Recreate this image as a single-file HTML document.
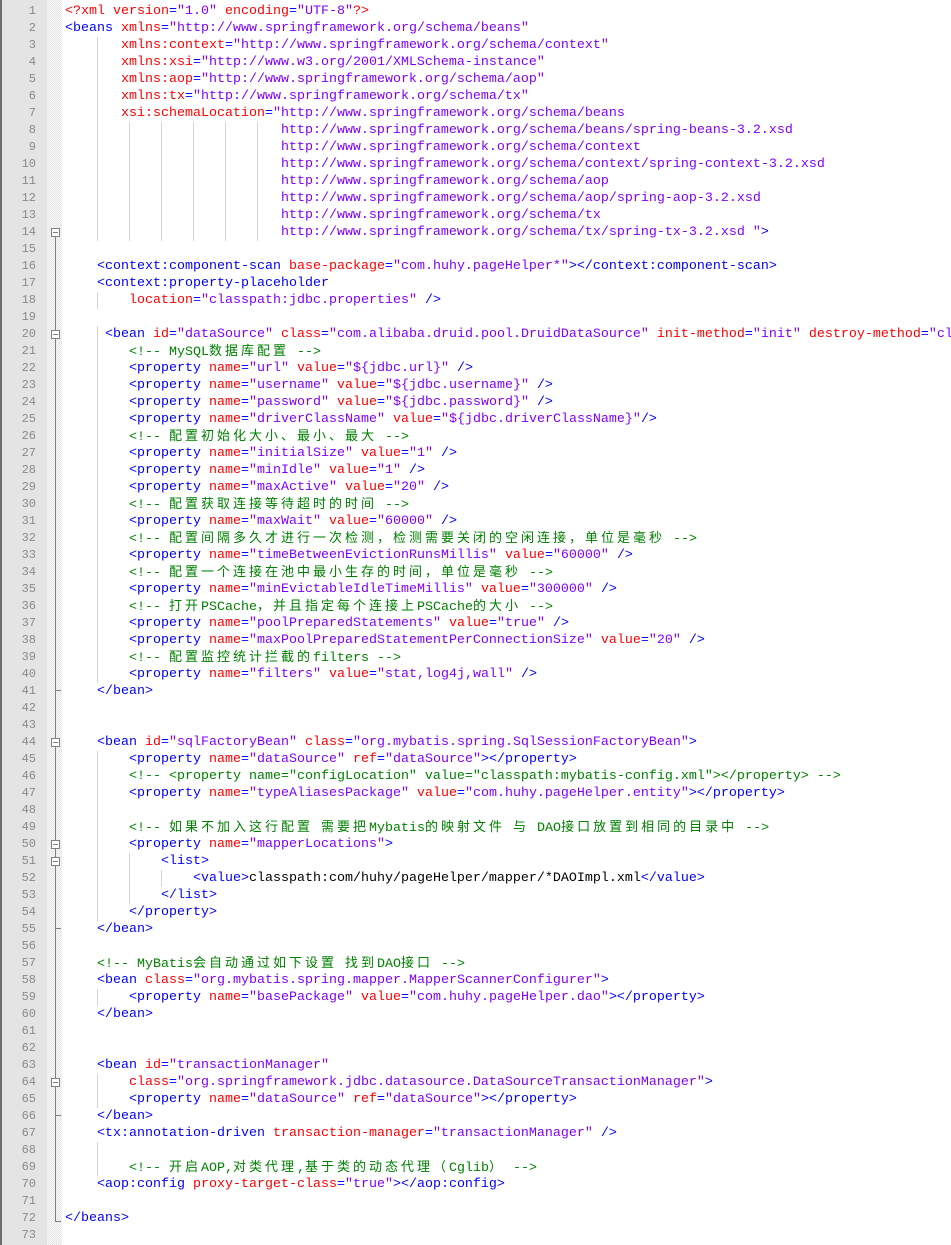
<!DOCTYPE html>
<html><head><meta charset="utf-8">
<style>
html,body{margin:0;padding:0;background:#fff;}
body{width:951px;height:1245px;overflow:hidden;position:relative;font-family:"Liberation Mono","Noto Sans CJK SC",monospace;font-size:13.33px;}
#gut{position:absolute;left:0;top:0;width:47px;height:1245px;background:#e4e4e4;border-left:2px solid #6d6d6d;box-sizing:border-box;}
#nums{position:absolute;left:0;top:3px;width:34px;}
#nums div{height:17px;line-height:17px;text-align:right;color:#8a8a8a;font-size:12px;}
#fold{position:absolute;left:47px;top:0;width:15px;height:1245px;background-color:#f0f0f0;background-image:repeating-conic-gradient(#e6e6e6 0 25%,#f8f8f8 0 50%);background-size:2px 2px;}
#lines{position:absolute;left:65px;top:3px;width:886px;}
.l{height:17px;line-height:17px;white-space:pre;color:#000;overflow:visible;background-repeat:no-repeat;background-position:32px 0;background-image:repeating-linear-gradient(to right,#d4d4d4 0 1px,transparent 1px 32px);background-size:0 0;}
.g1{background-size:1px 17px}.g2{background-size:33px 17px}.g3{background-size:65px 17px}.g6{background-size:161px 17px}
.t{color:#0000ff}.a{color:#ff0000}.v{color:#8000ff}.c{color:#008000}.x{color:#ff0000}
.k{letter-spacing:3px;font-size:13px;}
.fb{position:absolute;left:51px;width:9px;height:9px;border:1px solid #808080;background:#fff;box-sizing:border-box;}
.fb:after{content:"";position:absolute;left:1px;top:3px;width:5px;height:1px;background:#808080;}
.fl{position:absolute;left:55px;width:1px;background:#808080;}
.ft{position:absolute;left:55px;width:6px;height:1px;background:#808080;}
</style></head><body>
<div id="gut"><div id="nums"><div>1</div><div>2</div><div>3</div><div>4</div><div>5</div><div>6</div><div>7</div><div>8</div><div>9</div><div>10</div><div>11</div><div>12</div><div>13</div><div>14</div><div>15</div><div>16</div><div>17</div><div>18</div><div>19</div><div>20</div><div>21</div><div>22</div><div>23</div><div>24</div><div>25</div><div>26</div><div>27</div><div>28</div><div>29</div><div>30</div><div>31</div><div>32</div><div>33</div><div>34</div><div>35</div><div>36</div><div>37</div><div>38</div><div>39</div><div>40</div><div>41</div><div>42</div><div>43</div><div>44</div><div>45</div><div>46</div><div>47</div><div>48</div><div>49</div><div>50</div><div>51</div><div>52</div><div>53</div><div>54</div><div>55</div><div>56</div><div>57</div><div>58</div><div>59</div><div>60</div><div>61</div><div>62</div><div>63</div><div>64</div><div>65</div><div>66</div><div>67</div><div>68</div><div>69</div><div>70</div><div>71</div><div>72</div><div>73</div></div></div>
<div id="fold"></div>
<div id="lines">
<div class="l"><span class="x">&lt;?xml</span> <span class="a">version</span><span class="t">=</span><span class="v">"1.0"</span> <span class="a">encoding</span><span class="t">=</span><span class="v">"UTF-8"</span><span class="x">?&gt;</span></div>
<div class="l"><span class="t">&lt;beans</span> <span class="a">xmlns</span><span class="t">=</span><span class="v">"http://www.springframework.org/schema/beans"</span></div>
<div class="l g1">       <span class="a">xmlns:context</span><span class="t">=</span><span class="v">"http://www.springframework.org/schema/context"</span></div>
<div class="l g1">       <span class="a">xmlns:xsi</span><span class="t">=</span><span class="v">"http://www.w3.org/2001/XMLSchema-instance"</span></div>
<div class="l g1">       <span class="a">xmlns:aop</span><span class="t">=</span><span class="v">"http://www.springframework.org/schema/aop"</span></div>
<div class="l g1">       <span class="a">xmlns:tx</span><span class="t">=</span><span class="v">"http://www.springframework.org/schema/tx"</span></div>
<div class="l g1">       <span class="a">xsi:schemaLocation</span><span class="t">=</span><span class="v">"http://www.springframework.org/schema/beans</span></div>
<div class="l g6">                           <span class="v">http://www.springframework.org/schema/beans/spring-beans-3.2.xsd</span></div>
<div class="l g6">                           <span class="v">http://www.springframework.org/schema/context</span></div>
<div class="l g6">                           <span class="v">http://www.springframework.org/schema/context/spring-context-3.2.xsd</span></div>
<div class="l g6">                           <span class="v">http://www.springframework.org/schema/aop</span></div>
<div class="l g6">                           <span class="v">http://www.springframework.org/schema/aop/spring-aop-3.2.xsd</span></div>
<div class="l g6">                           <span class="v">http://www.springframework.org/schema/tx</span></div>
<div class="l g6">                           <span class="v">http://www.springframework.org/schema/tx/spring-tx-3.2.xsd "</span><span class="t">&gt;</span></div>
<div class="l"></div>
<div class="l">    <span class="t">&lt;context:component-scan</span> <span class="a">base-package</span><span class="t">=</span><span class="v">"com.huhy.pageHelper*"</span><span class="t">&gt;&lt;/context:component-scan&gt;</span></div>
<div class="l">    <span class="t">&lt;context:property-placeholder</span></div>
<div class="l g1">        <span class="a">location</span><span class="t">=</span><span class="v">"classpath:jdbc.properties"</span> <span class="t">/&gt;</span></div>
<div class="l"></div>
<div class="l g1">     <span class="t">&lt;bean</span> <span class="a">id</span><span class="t">=</span><span class="v">"dataSource"</span> <span class="a">class</span><span class="t">=</span><span class="v">"com.alibaba.druid.pool.DruidDataSource"</span> <span class="a">init-method</span><span class="t">=</span><span class="v">"init"</span> <span class="a">destroy-method</span><span class="t">=</span><span class="v">"close"</span><span class="t">&gt;</span></div>
<div class="l g1">        <span class="c">&lt;!-- MySQL<span class="k">数据库配置</span> --&gt;</span></div>
<div class="l g1">        <span class="t">&lt;property</span> <span class="a">name</span><span class="t">=</span><span class="v">"url"</span> <span class="a">value</span><span class="t">=</span><span class="v">"${jdbc.url}"</span> <span class="t">/&gt;</span></div>
<div class="l g1">        <span class="t">&lt;property</span> <span class="a">name</span><span class="t">=</span><span class="v">"username"</span> <span class="a">value</span><span class="t">=</span><span class="v">"${jdbc.username}"</span> <span class="t">/&gt;</span></div>
<div class="l g1">        <span class="t">&lt;property</span> <span class="a">name</span><span class="t">=</span><span class="v">"password"</span> <span class="a">value</span><span class="t">=</span><span class="v">"${jdbc.password}"</span> <span class="t">/&gt;</span></div>
<div class="l g1">        <span class="t">&lt;property</span> <span class="a">name</span><span class="t">=</span><span class="v">"driverClassName"</span> <span class="a">value</span><span class="t">=</span><span class="v">"${jdbc.driverClassName}"</span><span class="t">/&gt;</span></div>
<div class="l g1">        <span class="c">&lt;!-- <span class="k">配置初始化大小、最小、最大</span> --&gt;</span></div>
<div class="l g1">        <span class="t">&lt;property</span> <span class="a">name</span><span class="t">=</span><span class="v">"initialSize"</span> <span class="a">value</span><span class="t">=</span><span class="v">"1"</span> <span class="t">/&gt;</span></div>
<div class="l g1">        <span class="t">&lt;property</span> <span class="a">name</span><span class="t">=</span><span class="v">"minIdle"</span> <span class="a">value</span><span class="t">=</span><span class="v">"1"</span> <span class="t">/&gt;</span></div>
<div class="l g1">        <span class="t">&lt;property</span> <span class="a">name</span><span class="t">=</span><span class="v">"maxActive"</span> <span class="a">value</span><span class="t">=</span><span class="v">"20"</span> <span class="t">/&gt;</span></div>
<div class="l g1">        <span class="c">&lt;!-- <span class="k">配置获取连接等待超时的时间</span> --&gt;</span></div>
<div class="l g1">        <span class="t">&lt;property</span> <span class="a">name</span><span class="t">=</span><span class="v">"maxWait"</span> <span class="a">value</span><span class="t">=</span><span class="v">"60000"</span> <span class="t">/&gt;</span></div>
<div class="l g1">        <span class="c">&lt;!-- <span class="k">配置间隔多久才进行一次检测，检测需要关闭的空闲连接，单位是毫秒</span> --&gt;</span></div>
<div class="l g1">        <span class="t">&lt;property</span> <span class="a">name</span><span class="t">=</span><span class="v">"timeBetweenEvictionRunsMillis"</span> <span class="a">value</span><span class="t">=</span><span class="v">"60000"</span> <span class="t">/&gt;</span></div>
<div class="l g1">        <span class="c">&lt;!-- <span class="k">配置一个连接在池中最小生存的时间，单位是毫秒</span> --&gt;</span></div>
<div class="l g1">        <span class="t">&lt;property</span> <span class="a">name</span><span class="t">=</span><span class="v">"minEvictableIdleTimeMillis"</span> <span class="a">value</span><span class="t">=</span><span class="v">"300000"</span> <span class="t">/&gt;</span></div>
<div class="l g1">        <span class="c">&lt;!-- <span class="k">打开</span>PSCache<span class="k">，并且指定每个连接上</span>PSCache<span class="k">的大小</span> --&gt;</span></div>
<div class="l g1">        <span class="t">&lt;property</span> <span class="a">name</span><span class="t">=</span><span class="v">"poolPreparedStatements"</span> <span class="a">value</span><span class="t">=</span><span class="v">"true"</span> <span class="t">/&gt;</span></div>
<div class="l g1">        <span class="t">&lt;property</span> <span class="a">name</span><span class="t">=</span><span class="v">"maxPoolPreparedStatementPerConnectionSize"</span> <span class="a">value</span><span class="t">=</span><span class="v">"20"</span> <span class="t">/&gt;</span></div>
<div class="l g1">        <span class="c">&lt;!-- <span class="k">配置监控统计拦截的</span>filters --&gt;</span></div>
<div class="l g1">        <span class="t">&lt;property</span> <span class="a">name</span><span class="t">=</span><span class="v">"filters"</span> <span class="a">value</span><span class="t">=</span><span class="v">"stat,log4j,wall"</span> <span class="t">/&gt;</span></div>
<div class="l">    <span class="t">&lt;/bean&gt;</span></div>
<div class="l"></div>
<div class="l"></div>
<div class="l">    <span class="t">&lt;bean</span> <span class="a">id</span><span class="t">=</span><span class="v">"sqlFactoryBean"</span> <span class="a">class</span><span class="t">=</span><span class="v">"org.mybatis.spring.SqlSessionFactoryBean"</span><span class="t">&gt;</span></div>
<div class="l g1">        <span class="t">&lt;property</span> <span class="a">name</span><span class="t">=</span><span class="v">"dataSource"</span> <span class="a">ref</span><span class="t">=</span><span class="v">"dataSource"</span><span class="t">&gt;&lt;/property&gt;</span></div>
<div class="l g1">        <span class="c">&lt;!-- &lt;property name="configLocation" value="classpath:mybatis-config.xml"&gt;&lt;/property&gt; --&gt;</span></div>
<div class="l g1">        <span class="t">&lt;property</span> <span class="a">name</span><span class="t">=</span><span class="v">"typeAliasesPackage"</span> <span class="a">value</span><span class="t">=</span><span class="v">"com.huhy.pageHelper.entity"</span><span class="t">&gt;&lt;/property&gt;</span></div>
<div class="l g1"></div>
<div class="l g1">        <span class="c">&lt;!-- <span class="k">如果不加入这行配置</span> <span class="k">需要把</span>Mybatis<span class="k">的映射文件</span> <span class="k">与</span> DAO<span class="k">接口放置到相同的目录中</span> --&gt;</span></div>
<div class="l g1">        <span class="t">&lt;property</span> <span class="a">name</span><span class="t">=</span><span class="v">"mapperLocations"</span><span class="t">&gt;</span></div>
<div class="l g2">            <span class="t">&lt;list&gt;</span></div>
<div class="l g3">                <span class="t">&lt;value&gt;</span>classpath:com/huhy/pageHelper/mapper/*DAOImpl.xml<span class="t">&lt;/value&gt;</span></div>
<div class="l g2">            <span class="t">&lt;/list&gt;</span></div>
<div class="l g1">        <span class="t">&lt;/property&gt;</span></div>
<div class="l">    <span class="t">&lt;/bean&gt;</span></div>
<div class="l"></div>
<div class="l">    <span class="c">&lt;!-- MyBatis<span class="k">会自动通过如下设置</span> <span class="k">找到</span>DAO<span class="k">接口</span> --&gt;</span></div>
<div class="l">    <span class="t">&lt;bean</span> <span class="a">class</span><span class="t">=</span><span class="v">"org.mybatis.spring.mapper.MapperScannerConfigurer"</span><span class="t">&gt;</span></div>
<div class="l g1">        <span class="t">&lt;property</span> <span class="a">name</span><span class="t">=</span><span class="v">"basePackage"</span> <span class="a">value</span><span class="t">=</span><span class="v">"com.huhy.pageHelper.dao"</span><span class="t">&gt;&lt;/property&gt;</span></div>
<div class="l">    <span class="t">&lt;/bean&gt;</span></div>
<div class="l"></div>
<div class="l"></div>
<div class="l">    <span class="t">&lt;bean</span> <span class="a">id</span><span class="t">=</span><span class="v">"transactionManager"</span></div>
<div class="l g1">        <span class="a">class</span><span class="t">=</span><span class="v">"org.springframework.jdbc.datasource.DataSourceTransactionManager"</span><span class="t">&gt;</span></div>
<div class="l g1">        <span class="t">&lt;property</span> <span class="a">name</span><span class="t">=</span><span class="v">"dataSource"</span> <span class="a">ref</span><span class="t">=</span><span class="v">"dataSource"</span><span class="t">&gt;&lt;/property&gt;</span></div>
<div class="l">    <span class="t">&lt;/bean&gt;</span></div>
<div class="l">    <span class="t">&lt;tx:annotation-driven</span> <span class="a">transaction-manager</span><span class="t">=</span><span class="v">"transactionManager"</span> <span class="t">/&gt;</span></div>
<div class="l g1"></div>
<div class="l g1">        <span class="c">&lt;!-- <span class="k">开启</span>AOP,<span class="k">对类代理</span>,<span class="k">基于类的动态代理（</span>Cglib<span class="k">）</span> --&gt;</span></div>
<div class="l">    <span class="t">&lt;aop:config</span> <span class="a">proxy-target-class</span><span class="t">=</span><span class="v">"true"</span><span class="t">&gt;&lt;/aop:config&gt;</span></div>
<div class="l"></div>
<div class="l"><span class="t">&lt;/beans&gt;</span></div>
<div class="l"></div>
</div>
<div class="fl" style="top:231px;height:991px"></div>
<div class="ft" style="top:690px"></div>
<div class="ft" style="top:928px"></div>
<div class="ft" style="top:1115px"></div>
<div class="ft" style="top:1221px"></div>
<div class="fb" style="top:228px"></div>
<div class="fb" style="top:330px"></div>
<div class="fb" style="top:738px"></div>
<div class="fb" style="top:840px"></div>
<div class="fb" style="top:857px"></div>
<div class="fb" style="top:1078px"></div>
</body></html>
